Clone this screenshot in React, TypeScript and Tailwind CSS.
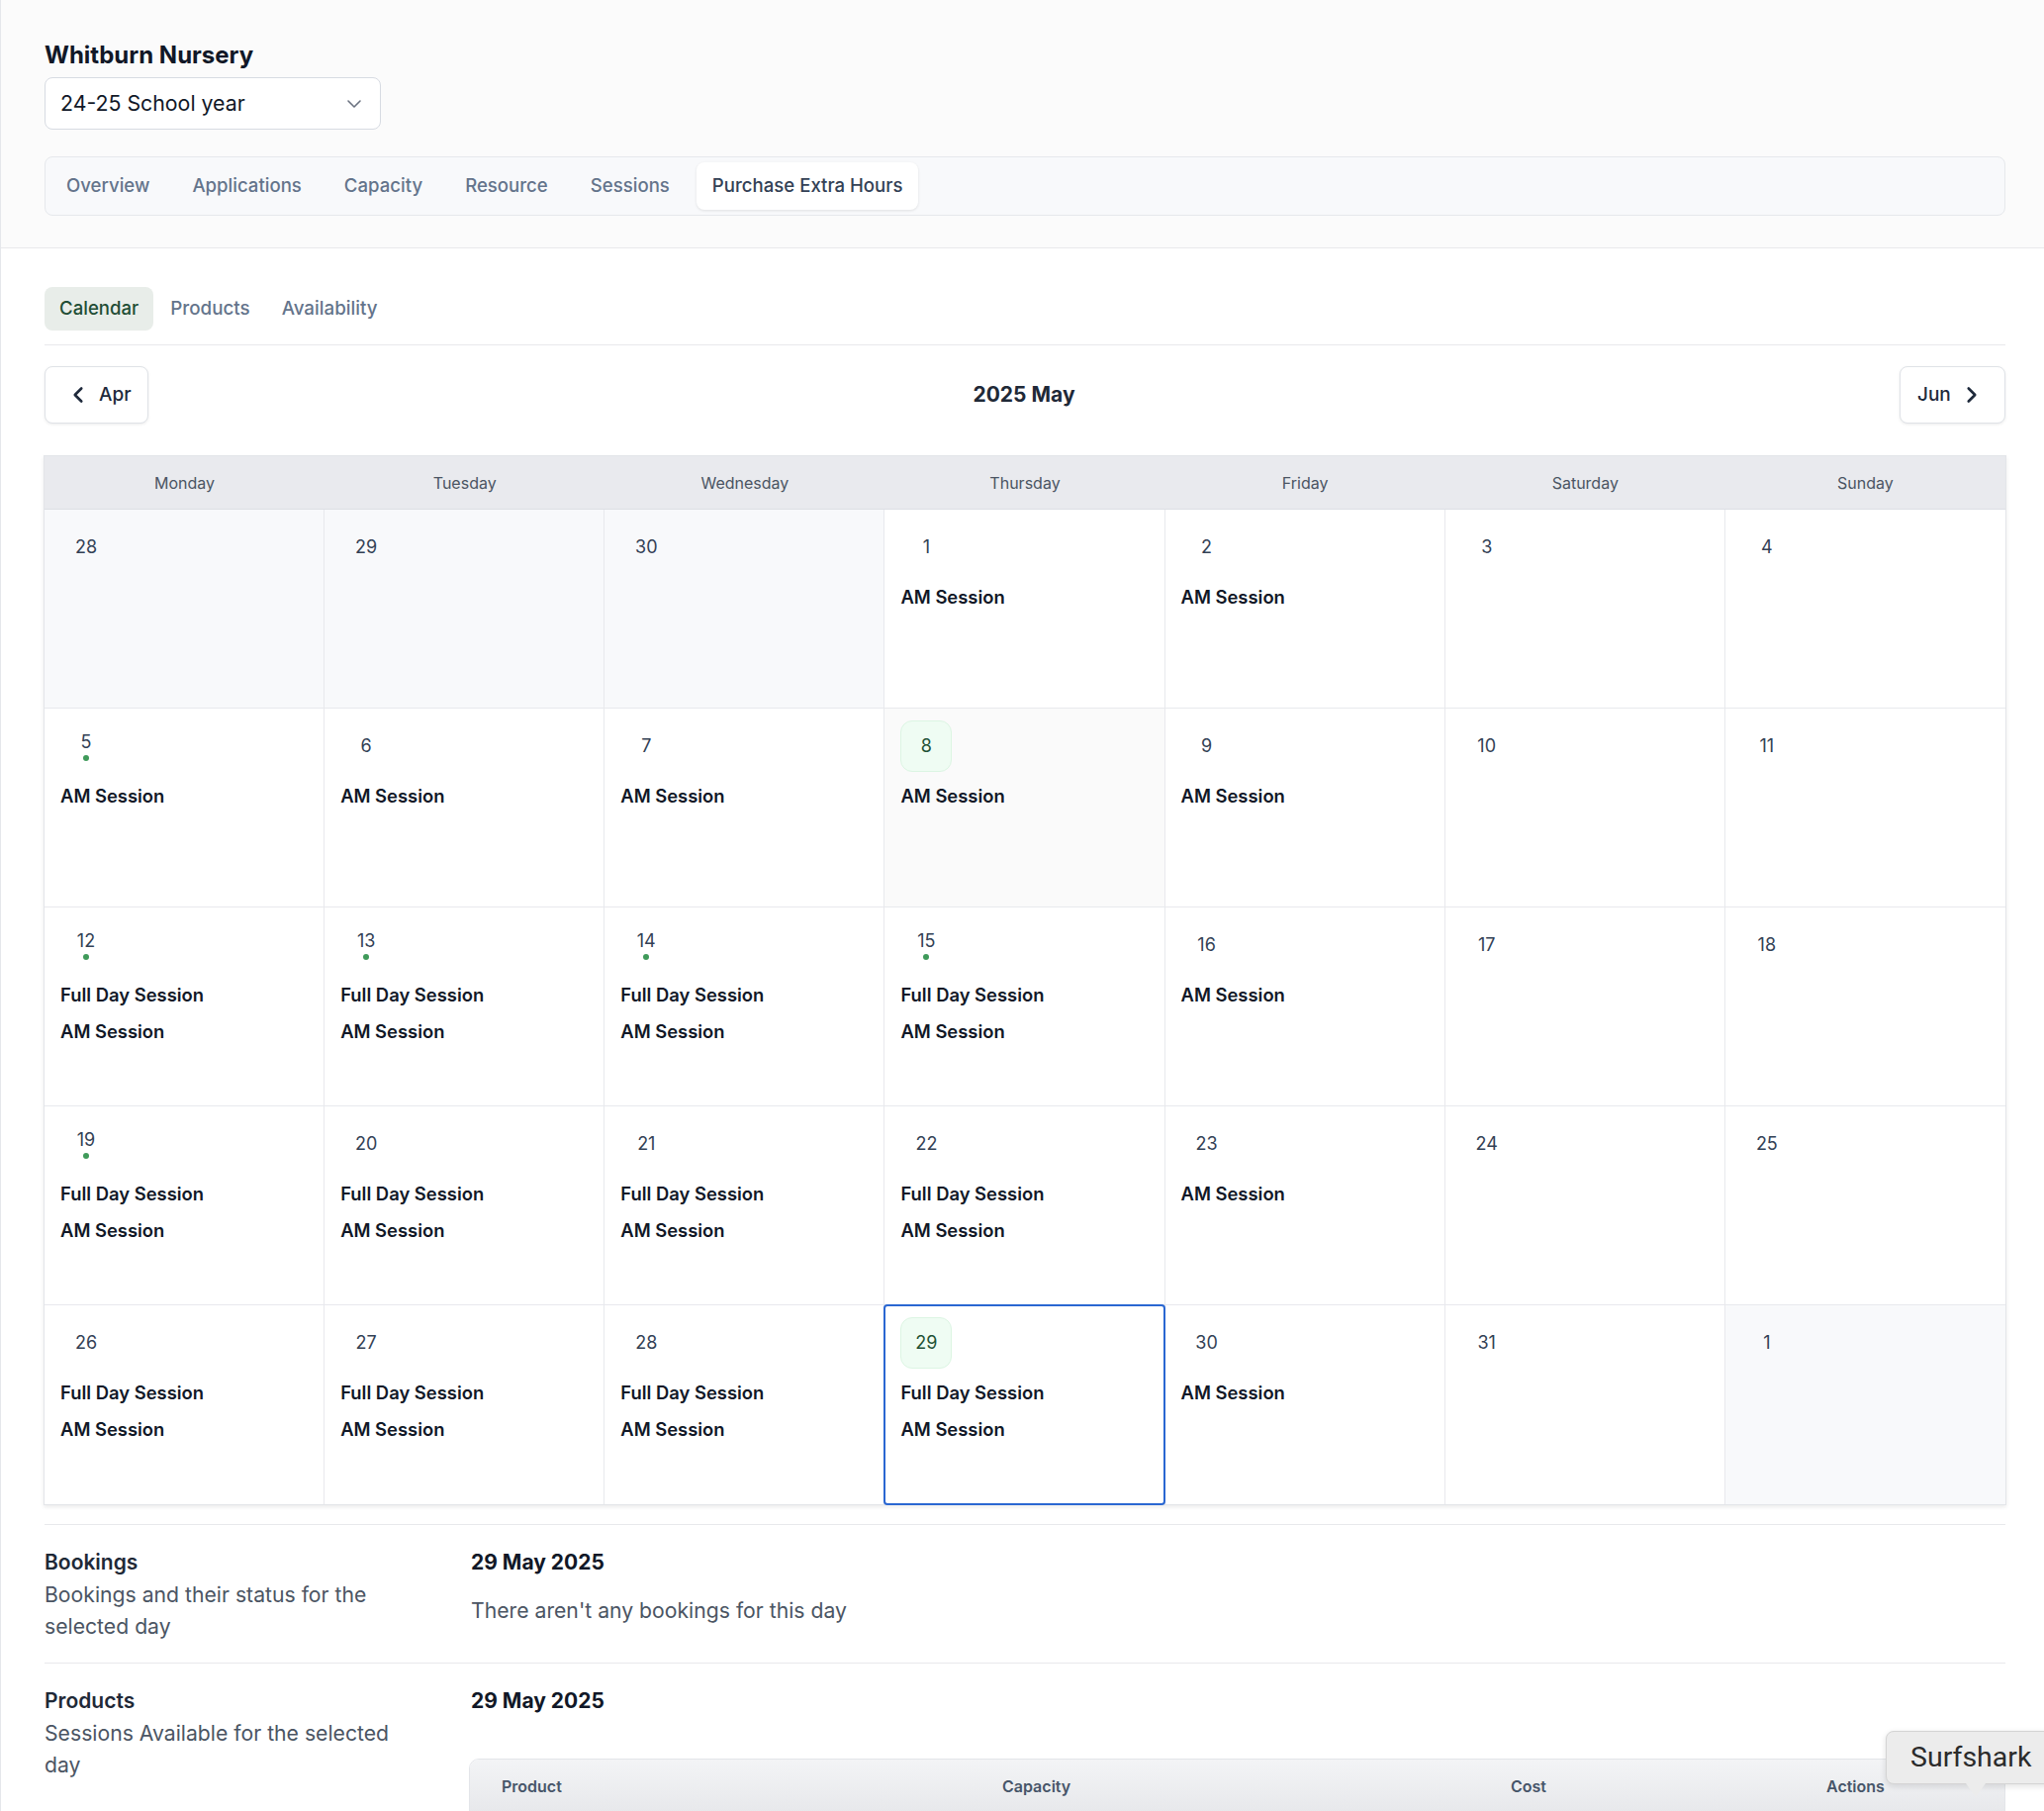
import React from "react";
import { ChevronDown, ChevronLeft, ChevronRight } from "lucide-react";

type Day = {
  n: number;
  outside?: boolean;
  dot?: boolean;
  today?: boolean;
  selected?: boolean;
  s: string[];
};

const AM = "AM Session";
const FD = "Full Day Session";

const rows: Day[][] = [
  [
    { n: 28, outside: true, s: [] },
    { n: 29, outside: true, s: [] },
    { n: 30, outside: true, s: [] },
    { n: 1, s: [AM] },
    { n: 2, s: [AM] },
    { n: 3, s: [] },
    { n: 4, s: [] },
  ],
  [
    { n: 5, dot: true, s: [AM] },
    { n: 6, s: [AM] },
    { n: 7, s: [AM] },
    { n: 8, today: true, s: [AM] },
    { n: 9, s: [AM] },
    { n: 10, s: [] },
    { n: 11, s: [] },
  ],
  [
    { n: 12, dot: true, s: [FD, AM] },
    { n: 13, dot: true, s: [FD, AM] },
    { n: 14, dot: true, s: [FD, AM] },
    { n: 15, dot: true, s: [FD, AM] },
    { n: 16, s: [AM] },
    { n: 17, s: [] },
    { n: 18, s: [] },
  ],
  [
    { n: 19, dot: true, s: [FD, AM] },
    { n: 20, s: [FD, AM] },
    { n: 21, s: [FD, AM] },
    { n: 22, s: [FD, AM] },
    { n: 23, s: [AM] },
    { n: 24, s: [] },
    { n: 25, s: [] },
  ],
  [
    { n: 26, s: [FD, AM] },
    { n: 27, s: [FD, AM] },
    { n: 28, s: [FD, AM] },
    { n: 29, selected: true, s: [FD, AM] },
    { n: 30, s: [AM] },
    { n: 31, s: [] },
    { n: 1, outside: true, s: [] },
  ],
];

const weekdays = ["Monday", "Tuesday", "Wednesday", "Thursday", "Friday", "Saturday", "Sunday"];

function Cell({ d, last, lastCol }: { d: Day; last: boolean; lastCol: boolean }) {
  const bg = d.outside ? "bg-[#f8f9fb]" : d.today ? "bg-[#fafafa]" : "bg-white";
  const boxed = d.today || d.selected;
  return (
    <div
      className={`relative ${last ? "h-[201px]" : "h-[201px] border-b"} ${lastCol ? "" : "border-r"} border-[#e8e9ed] ${bg} pl-[16px] pr-[12px] pt-[12px]`}
    >
      {d.selected && (
        <div className="pointer-events-none absolute inset-[-1px] rounded-[4px] border-[2px] border-[#2a67d2]" />
      )}
      <div
        className={`flex h-[52px] w-[52px] flex-col items-center justify-center rounded-[12px] ${
          boxed ? "border border-[#dcf5e3] bg-[#effcf3] text-[#1f5135]" : "text-[#334155]"
        }`}
      >
        <span className="text-[18px] leading-[22px]">{d.n}</span>
        {d.dot && <span className="mt-[2px] h-[6px] w-[6px] rounded-full bg-[#3f9a5a]" />}
      </div>
      <div className="mt-[10px] flex flex-col gap-[9px]">
        {d.s.map((t, i) => (
          <div key={i} className="text-[18.4px] font-semibold leading-[28px] text-[#111827]">
            {t}
          </div>
        ))}
      </div>
    </div>
  );
}

export default function App() {
  const font = { fontFamily: "Inter, 'Noto Sans', sans-serif" };
  return (
    <div className="min-h-[1830px] border-l border-[#e5e7eb] bg-white" style={font}>
      {/* Header */}
      <div className="border-b border-[#e8e9ec] bg-[#fbfbfb] pb-[32px] pl-[44px] pr-[39px] pt-[40px]">
        <h1 className="text-[24px] font-bold leading-[31px] text-[#111827]">Whitburn Nursery</h1>
        <div className="mt-[7px] flex h-[53px] w-[340px] items-center justify-between rounded-[8px] border border-[#d7dbe2] bg-white pl-[15px] pr-[14px]">
          <span className="text-[21.3px] text-[#111827]">24-25 School year</span>
          <ChevronDown className="h-[24px] w-[24px] text-[#6b7280]" strokeWidth={1.6} />
        </div>
        <div className="mt-[27px] flex h-[60px] items-center gap-[11px] rounded-[8px] border border-[#e6e8ec] bg-[#f8f9fb] px-[5px]">
          {["Overview", "Applications", "Capacity", "Resource", "Sessions"].map((t) => (
            <div key={t} className="px-[16px] text-[18.6px] font-medium text-[#64748b]">
              {t}
            </div>
          ))}
          <div className="flex h-[48px] items-center rounded-[8px] bg-white px-[16px] text-[18.6px] font-medium text-[#334155] shadow-[0_1px_3px_rgba(0,0,0,0.1)]">
            Purchase Extra Hours
          </div>
        </div>
      </div>

      {/* Main */}
      <div className="pl-[44px] pr-[39px] pt-[39px]">
        <div className="flex items-center border-b border-[#e8e9ec] pb-[14px]">
          <div className="flex h-[44px] items-center rounded-[8px] bg-[#e8ede9] px-[15px] text-[18.6px] font-medium text-[#1f4d35]">
            Calendar
          </div>
          <div className="px-[17px] text-[18.8px] font-medium text-[#64748b]">Products</div>
          <div className="px-[15px] text-[18.8px] font-medium text-[#64748b]">Availability</div>
        </div>

        <div className="mt-[21px] flex items-center justify-between">
          <div className="flex h-[58px] w-[105px] items-center gap-[8px] rounded-[8px] border border-[#dfe2e7] bg-white pl-[20px] shadow-[0_1px_3px_rgba(0,0,0,0.08)]">
            <ChevronLeft className="h-[26px] w-[26px] text-[#1e293b]" strokeWidth={2.4} />
            <span className="text-[19px] font-medium text-[#1e293b]">Apr</span>
          </div>
          <div className="text-[21px] font-bold text-[#1f2937]">2025 May</div>
          <div className="flex h-[58px] w-[107px] items-center gap-[8px] rounded-[8px] border border-[#dfe2e7] bg-white pl-[17px] shadow-[0_1px_3px_rgba(0,0,0,0.08)]">
            <span className="text-[19px] font-medium text-[#1e293b]">Jun</span>
            <ChevronRight className="h-[26px] w-[26px] text-[#1e293b]" strokeWidth={2.4} />
          </div>
        </div>

        {/* Calendar */}
        <div className="mt-[32px] ml-[-1px] mr-[-1px] border border-[#e3e5e9] shadow-[0_2px_4px_rgba(0,0,0,0.08)]">
          <div className="grid h-[54px] grid-cols-7 border-b border-[#dcdfe4] bg-[#e9eaee]">
            {weekdays.map((w) => (
              <div key={w} className="flex items-center justify-center text-[16px] text-[#4b5563]">
                {w}
              </div>
            ))}
          </div>
          <div className="grid grid-cols-7">
            {rows.map((r, ri) =>
              r.map((d, ci) => (
                <Cell key={`${ri}-${ci}`} d={d} last={ri === rows.length - 1} lastCol={ci === 6} />
              ))
            )}
          </div>
        </div>

        {/* Bookings */}
        <div className="mt-[19px] grid grid-cols-[431px_1fr] border-t border-[#e8e9ec] pb-[21px] pt-[22px]">
          <div>
            <div className="text-[21px] font-semibold leading-[32px] text-[#1f2937]">Bookings</div>
            <div className="w-[350px] text-[21.2px] leading-[32px] text-[#4b5563]">
              Bookings and their status for the selected day
            </div>
          </div>
          <div>
            <div className="text-[21px] font-bold leading-[32px] text-[#111827]">29 May 2025</div>
            <div className="mt-[16px] text-[21.2px] leading-[32px] text-[#4b5563]">
              There aren't any bookings for this day
            </div>
          </div>
        </div>

        {/* Products */}
        <div className="grid grid-cols-[431px_1fr] border-t border-[#e8e9ec] pt-[22px]">
          <div>
            <div className="text-[21px] font-semibold leading-[32px] text-[#1f2937]">Products</div>
            <div className="w-[375px] text-[21.2px] leading-[32px] text-[#4b5563]">
              Sessions Available for the selected day
            </div>
          </div>
          <div className="ml-[-2px]">
            <div className="pl-[2px] text-[21px] font-bold leading-[32px] text-[#111827]">29 May 2025</div>
            <div className="mt-[42px] overflow-hidden rounded-t-[10px] border border-[#e3e5e9]">
              <div className="grid h-[54px] grid-cols-[506px_514px_319px_1fr] items-center bg-gradient-to-b from-[#f3f4f6] to-[#e7e8eb] text-[16px] font-semibold text-[#475569]">
                <div className="pl-[32px]">Product</div>
                <div className="pl-[32px]">Capacity</div>
                <div className="pl-[32px]">Cost</div>
                <div className="pl-[32px]">Actions</div>
              </div>
            </div>
          </div>
        </div>
      </div>

      {/* Surfshark tooltip overlay */}
      <div className="absolute left-[1906px] top-[1749px] w-[170px]">
        <div className="relative flex h-[54px] items-center rounded-[8px] border border-[#d4d4d4] bg-[#ececec] pl-[24px] shadow-[0_2px_6px_rgba(0,0,0,0.12)]">
          <span className="text-[28.5px] text-[#2b2b2b]" style={{ fontFamily: "Roboto, 'Liberation Sans', sans-serif" }}>
            Surfshark
          </span>
          <div className="absolute left-[80px] top-[52px] h-0 w-0 border-x-[10px] border-t-[14px] border-x-transparent border-t-[#ececec]" />
        </div>
      </div>
    </div>
  );
}
